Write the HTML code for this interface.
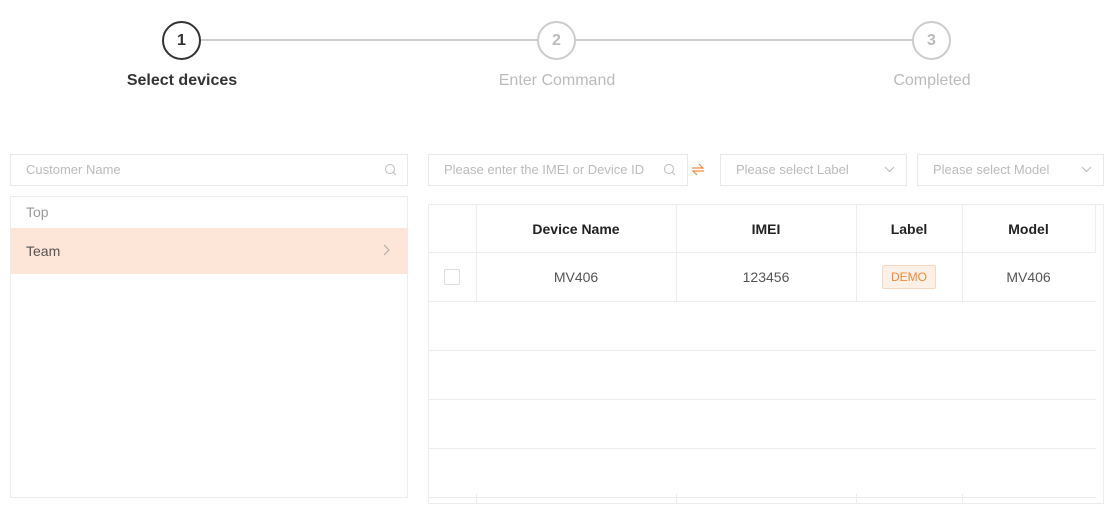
<!DOCTYPE html><html><head><style>
*{box-sizing:border-box;margin:0;padding:0}
body{width:1114px;height:507px;background:#fff;font-family:"Liberation Sans",Arial,sans-serif;position:relative;overflow:hidden}
.a{position:absolute}
.c{width:39px;height:39px;border-radius:50%;border:2px solid #ccc;color:#bbb;font-size:16px;font-weight:bold;display:flex;align-items:center;justify-content:center;background:#fff}
.ln{height:2px;background:#ccc;top:39px}
.lb{font-size:16px;color:#bbb;width:200px;text-align:center;top:72px}
.in{border:1px solid #e8e8e8;height:32px;font-size:13px;color:#bbb;padding-left:15px;line-height:30px}
.th{font-size:14px;font-weight:bold;color:#222;text-align:center;top:221px}
.td{font-size:14px;color:#555;text-align:center;top:269px}
.h{height:1px;background:#ececec}
.v{width:1px;background:#ececec}
</style></head><body>
<div class="a ln" style="left:201px;width:337px"></div>
<div class="a ln" style="left:576px;width:337px"></div>
<div class="a c" style="left:162px;top:21px;border-color:#333;color:#333">1</div>
<div class="a c" style="left:537px;top:21px">2</div>
<div class="a c" style="left:912px;top:21px">3</div>
<div class="a lb" style="left:82px;color:#333;font-weight:bold">Select devices</div>
<div class="a lb" style="left:457px">Enter Command</div>
<div class="a lb" style="left:832px">Completed</div>

<div class="a in" style="left:10px;top:154px;width:398px">Customer Name</div>
<svg class="a" style="left:384px;top:163px" width="13" height="13" viewBox="0 0 13 13"><circle cx="6" cy="6" r="4.5" fill="none" stroke="#bbb"/><path d="M9.3 9.3L12 12" stroke="#bbb"/></svg>
<div class="a" style="left:10px;top:196px;width:398px;height:302px;border:1px solid #ececec"></div>
<div class="a" style="left:26px;top:204px;font-size:14px;color:#999">Top</div>
<div class="a" style="left:11px;top:228px;width:396px;height:46px;background:#fde5d8"></div>
<div class="a" style="left:26px;top:243px;font-size:14px;color:#555">Team</div>
<svg class="a" style="left:382px;top:244px" width="8" height="12" viewBox="0 0 8 12"><path d="M2 1l5 5-5 5" fill="none" stroke="#aaa"/></svg>

<div class="a in" style="left:428px;top:154px;width:260px">Please enter the IMEI or Device ID</div>
<svg class="a" style="left:663px;top:163px" width="13" height="13" viewBox="0 0 13 13"><circle cx="6" cy="6" r="4.5" fill="none" stroke="#bbb"/><path d="M9.3 9.3L12 12" stroke="#bbb"/></svg>
<svg class="a" style="left:691px;top:163px" width="14" height="13" viewBox="0 0 14 13"><path d="M1 5h11L8 1M13 8H2l4 4" fill="none" stroke="#f08a3c" stroke-width="1.2"/></svg>
<div class="a in" style="left:720px;top:154px;width:187px">Please select Label</div>
<svg class="a" style="left:884px;top:166px" width="11" height="7"><path d="M1 1l4.5 4.5L10 1" fill="none" stroke="#bbb"/></svg>
<div class="a in" style="left:917px;top:154px;width:187px">Please select Model</div>
<svg class="a" style="left:1081px;top:166px" width="11" height="7"><path d="M1 1l4.5 4.5L10 1" fill="none" stroke="#bbb"/></svg>

<div class="a" style="left:428px;top:204px;width:676px;height:300px;border:1px solid #ececec"></div>
<div class="a h" style="left:429px;top:252px;width:667px"></div>
<div class="a h" style="left:429px;top:301px;width:667px"></div>
<div class="a h" style="left:429px;top:350px;width:667px"></div>
<div class="a h" style="left:429px;top:399px;width:667px"></div>
<div class="a h" style="left:429px;top:448px;width:667px"></div>
<div class="a h" style="left:429px;top:497px;width:667px"></div>
<div class="a v" style="left:476px;top:205px;height:96px"></div>
<div class="a v" style="left:676px;top:205px;height:96px"></div>
<div class="a v" style="left:856px;top:205px;height:96px"></div>
<div class="a v" style="left:962px;top:205px;height:96px"></div>
<div class="a v" style="left:1095px;top:205px;height:48px"></div>
<div class="a v" style="left:476px;top:494px;height:10px"></div>
<div class="a v" style="left:676px;top:494px;height:10px"></div>
<div class="a v" style="left:856px;top:494px;height:10px"></div>
<div class="a v" style="left:962px;top:494px;height:10px"></div>
<div class="a th" style="left:476px;width:200px">Device Name</div>
<div class="a th" style="left:676px;width:180px">IMEI</div>
<div class="a th" style="left:856px;width:106px">Label</div>
<div class="a th" style="left:962px;width:133px">Model</div>
<div class="a" style="left:444px;top:269px;width:16px;height:16px;border:1px solid #ddd;border-radius:2px"></div>
<div class="a td" style="left:476px;width:200px">MV406</div>
<div class="a td" style="left:676px;width:180px">123456</div>
<div class="a td" style="left:962px;width:133px">MV406</div>
<div class="a" style="left:882px;top:265px;width:54px;height:24px;background:#fdf0e6;border:1px solid #f9d7bd;border-radius:2px;color:#f08a3c;font-size:12px;text-align:center;line-height:22px">DEMO</div>
</body></html>
